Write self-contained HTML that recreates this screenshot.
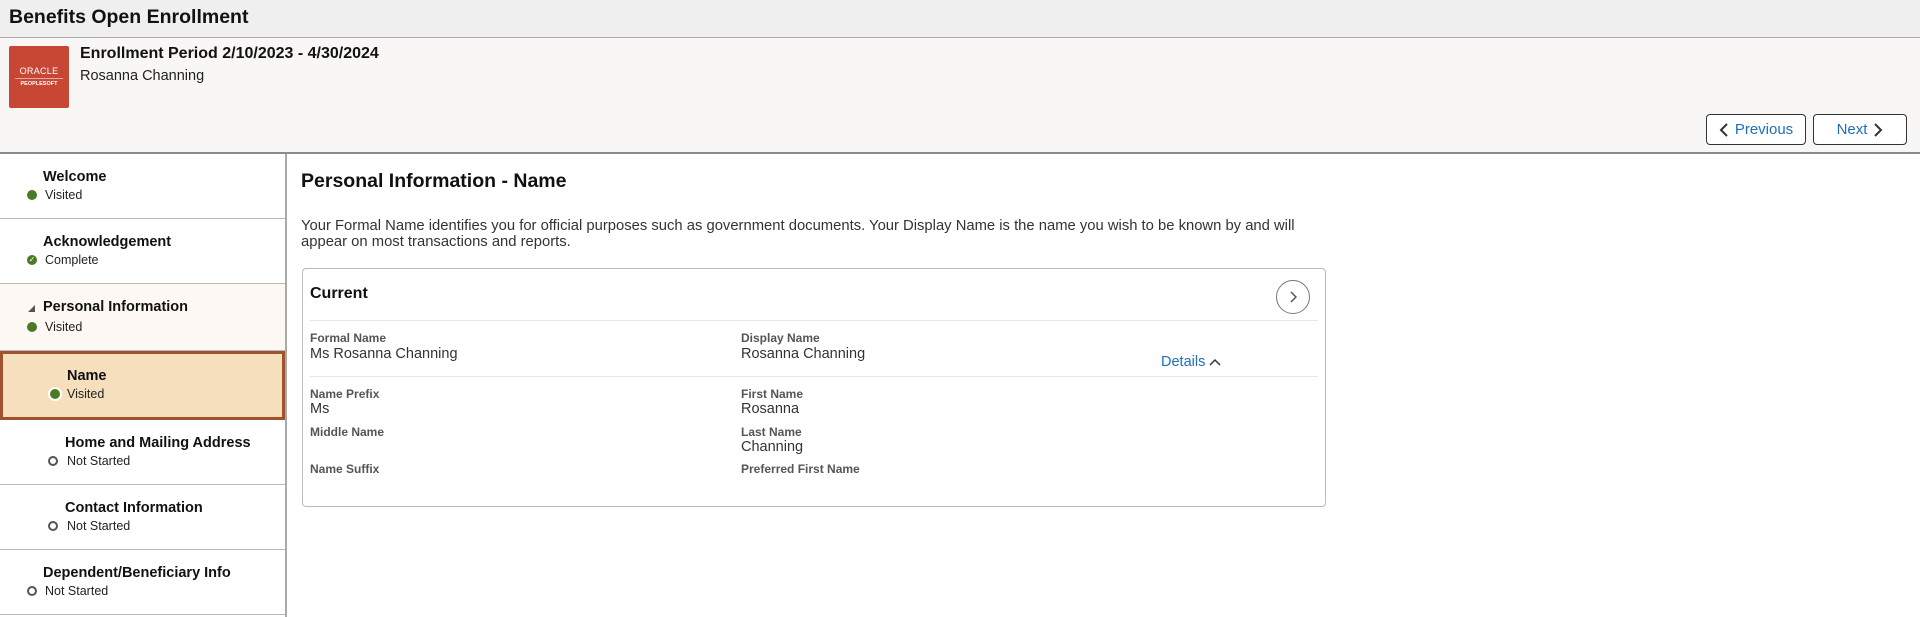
<!DOCTYPE html>
<html><head><style>
*{margin:0;padding:0;box-sizing:border-box}
body{width:1920px;height:617px;overflow:hidden;font-family:"Liberation Sans",Arial,sans-serif;color:#000;background:#fff;position:relative}
.a{position:absolute;white-space:nowrap}
.tb{left:0;top:0;width:1920px;height:38px;background:#efefef;border-bottom:1px solid #aaa}
.bn{left:0;top:38px;width:1920px;height:116px;background:#f8f7f5;border-bottom:2px solid #8a8a8a}
.btn{border:1px solid #333;border-radius:4px;background:#fff;color:#1f6fb5;font-size:15px;height:31px;top:114px;display:flex;align-items:center;justify-content:center;gap:6px}
.side{left:0;top:154px;width:287px;height:463px;border-right:2px solid #aaa}
.it{position:absolute;left:0;width:285px;border-bottom:1px solid #bbb}
.t{position:absolute;font-size:14.5px;font-weight:bold;color:#111}
.s{position:absolute;font-size:12.5px;color:#222}
.d{position:absolute;width:10px;height:10px;border-radius:50%}
.g{background:#4a7a23}
.o{border:2px solid #555;background:#fff}
.lb{font-size:12px;font-weight:bold;color:#555}
.v{font-size:14.5px;color:#333}
</style></head><body>
<div class="a tb"></div>
<div class="a" style="left:9px;top:6px;font-size:19.5px;font-weight:bold;color:#111">Benefits Open Enrollment</div>
<div class="a bn"></div>
<div class="a" style="left:9px;top:46px;width:60px;height:62px;background:#c74634;border-radius:2px;color:#fff;text-align:center">
 <div style="font-size:9px;margin-top:20px;letter-spacing:0.3px">ORACLE</div>
 <div style="height:1px;background:#e8a99f;margin:2px 6px"></div>
 <div style="font-size:5.5px;font-weight:bold">PEOPLESOFT</div>
</div>
<div class="a" style="left:80px;top:45px;font-size:16px;font-weight:bold;color:#111">Enrollment Period 2/10/2023 - 4/30/2024</div>
<div class="a" style="left:80px;top:68px;font-size:14.5px;color:#222">Rosanna Channing</div>
<div class="a btn" style="left:1706px;width:100px"><svg width="10" height="14"><path d="M8 1L2 7l6 6" stroke="#333" stroke-width="2" fill="none"/></svg>Previous</div>
<div class="a btn" style="left:1813px;width:94px">Next<svg width="10" height="14"><path d="M2 1l6 6-6 6" stroke="#333" stroke-width="2" fill="none"/></svg></div>

<div class="a side">
 <div class="it" style="top:0;height:65px"><div class="t" style="left:43px;top:15px">Welcome</div><div class="d g" style="left:27px;top:36px"></div><div class="s" style="left:45px;top:34px">Visited</div></div>
 <div class="it" style="top:65px;height:65px"><div class="t" style="left:43px;top:15px">Acknowledgement</div><div class="d g" style="left:27px;top:36px;font-size:8px;color:#fff;line-height:10px;text-align:center">✓</div><div class="s" style="left:45px;top:34px">Complete</div></div>
 <div class="it" style="top:130px;height:67px;background:#fdf8f3"><div style="position:absolute;left:28px;top:21px;width:0;height:0;border-left:7px solid transparent;border-bottom:7px solid #555"></div><div class="t" style="left:43px;top:15px">Personal Information</div><div class="d g" style="left:27px;top:38px"></div><div class="s" style="left:45px;top:36px">Visited</div></div>
 <div class="it" style="top:197px;height:69px;background:#f5dfbd;border:3px solid #a0522d"><div class="t" style="left:64px;top:14px">Name</div><div class="d g" style="left:47px;top:35px;box-shadow:0 0 0 2px #fff"></div><div class="s" style="left:64px;top:33px">Visited</div></div>
 <div class="it" style="top:266px;height:65px"><div class="t" style="left:65px;top:15px">Home and Mailing Address</div><div class="d o" style="left:48px;top:36px"></div><div class="s" style="left:67px;top:34px">Not Started</div></div>
 <div class="it" style="top:331px;height:65px"><div class="t" style="left:65px;top:15px">Contact Information</div><div class="d o" style="left:48px;top:36px"></div><div class="s" style="left:67px;top:34px">Not Started</div></div>
 <div class="it" style="top:396px;height:65px"><div class="t" style="left:43px;top:15px">Dependent/Beneficiary Info</div><div class="d o" style="left:27px;top:36px"></div><div class="s" style="left:45px;top:34px">Not Started</div></div>
</div>

<div class="a" style="left:301px;top:170px;font-size:19.5px;font-weight:bold;color:#111">Personal Information - Name</div>
<div class="a" style="left:301px;top:218px;font-size:14.8px;line-height:16px;color:#333">Your Formal Name identifies you for official purposes such as government documents. Your Display Name is the name you wish to be known by and will<br>appear on most transactions and reports.</div>
<div class="a" style="left:302px;top:268px;width:1024px;height:239px;border:1px solid #bbb;border-radius:4px"></div>
<div class="a" style="left:310px;top:285px;font-size:16px;font-weight:bold;color:#111">Current</div>
<div class="a" style="left:1276px;top:280px;width:34px;height:34px;border:1px solid #777;border-radius:50%;display:flex;align-items:center;justify-content:center"><svg width="8" height="12"><path d="M2 1l5 5-5 5" stroke="#555" stroke-width="1.5" fill="none"/></svg></div>
<div class="a" style="left:310px;top:320px;width:1008px;height:1px;background:#e6e6e6"></div>
<div class="a" style="left:310px;top:376px;width:1008px;height:1px;background:#e6e6e6"></div>
<div class="a lb" style="left:310px;top:331px">Formal Name</div>
<div class="a v" style="left:310px;top:346px">Ms Rosanna Channing</div>
<div class="a lb" style="left:741px;top:331px">Display Name</div>
<div class="a v" style="left:741px;top:346px">Rosanna Channing</div>
<div class="a" style="left:1161px;top:354px;font-size:14.5px;color:#1f6fb5">Details <svg width="12" height="8"><path d="M1 7l5-5 5 5" stroke="#333" stroke-width="1.5" fill="none"/></svg></div>
<div class="a lb" style="left:310px;top:387px">Name Prefix</div>
<div class="a v" style="left:310px;top:401px">Ms</div>
<div class="a lb" style="left:310px;top:425px">Middle Name</div>
<div class="a lb" style="left:310px;top:462px">Name Suffix</div>
<div class="a lb" style="left:741px;top:387px">First Name</div>
<div class="a v" style="left:741px;top:401px">Rosanna</div>
<div class="a lb" style="left:741px;top:425px">Last Name</div>
<div class="a v" style="left:741px;top:439px">Channing</div>
<div class="a lb" style="left:741px;top:462px">Preferred First Name</div>
</body></html>
